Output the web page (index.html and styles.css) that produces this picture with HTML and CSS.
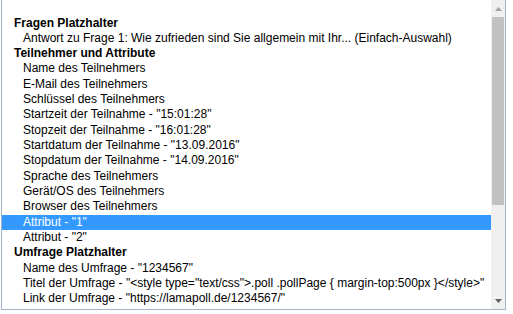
FILE: index.html
```html
<!DOCTYPE html>
<html>
<head>
<meta charset="utf-8">
<link rel="stylesheet" href="styles.css">
</head>
<body>
<div class="listbox">
  <div class="list">
    <div class="group">Fragen Platzhalter</div>
    <div class="opt">Antwort zu Frage 1: Wie zufrieden sind Sie allgemein mit Ihr... (Einfach-Auswahl)</div>
    <div class="group">Teilnehmer und Attribute</div>
    <div class="opt">Name des Teilnehmers</div>
    <div class="opt">E-Mail des Teilnehmers</div>
    <div class="opt">Schlüssel des Teilnehmers</div>
    <div class="opt">Startzeit der Teilnahme - "15:01:28"</div>
    <div class="opt">Stopzeit der Teilnahme - "16:01:28"</div>
    <div class="opt">Startdatum der Teilnahme - "13.09.2016"</div>
    <div class="opt">Stopdatum der Teilnahme - "14.09.2016"</div>
    <div class="opt">Sprache des Teilnehmers</div>
    <div class="opt">Gerät/OS des Teilnehmers</div>
    <div class="opt">Browser des Teilnehmers</div>
    <div class="opt selected">Attribut - "1"</div>
    <div class="opt">Attribut - "2"</div>
    <div class="group">Umfrage Platzhalter</div>
    <div class="opt">Name des Umfrage - "1234567"</div>
    <div class="opt">Titel der Umfrage - "&lt;style type="text/css"&gt;.poll .pollPage { margin-top:500px }&lt;/style&gt;"</div>
    <div class="opt">Link der Umfrage - "https://lamapoll.de/1234567/"</div>
  </div>
  <div class="scrollbar">
    <div class="btn up"><svg width="7" height="4" viewBox="0 0 7 4"><polygon points="0,4 7,4 3.5,0" fill="#a3a3a3"/></svg></div>
    <div class="track">
      <div class="thumb"></div>
    </div>
    <div class="btn down"><svg width="7" height="4" viewBox="0 0 7 4"><polygon points="0,0 7,0 3.5,4" fill="#606060"/></svg></div>
  </div>
</div>
</body>
</html>
```

FILE: styles.css
```css
html, body {
  margin: 0;
  padding: 0;
  background: #ffffff;
}

.listbox {
  margin-left: 1px;
  width: 505px;
  height: 310px;
  box-sizing: border-box;
  border-left: 1px solid #a4b4cc;
  border-right: 1px solid #a4b4cc;
  border-bottom: 1px solid #a4b4cc;
  display: flex;
  overflow: hidden;
  font-family: "Liberation Sans", Arial, sans-serif;
  font-size: 12px;
  color: #000;
}

.list {
  flex: 1;
  padding-top: 15.5px;
  white-space: nowrap;
  overflow: hidden;
}

.group,
.opt {
  height: 15.33px;
  line-height: 15.33px;
}

.group {
  font-weight: bold;
  padding-left: 12px;
}

.opt {
  padding-left: 21px;
}

.opt.selected {
  background: #3399ff;
  color: #ffffff;
}

.scrollbar {
  width: 14px;
  background: #f0f0f0;
  display: flex;
  flex-direction: column;
}

.btn {
  height: 17px;
  display: flex;
  align-items: center;
  justify-content: center;
}

.track {
  flex: 1;
  padding: 0 1px 0 1px;
}

.thumb {
  height: 188px;
  background: #c1c1c1;
}
```
